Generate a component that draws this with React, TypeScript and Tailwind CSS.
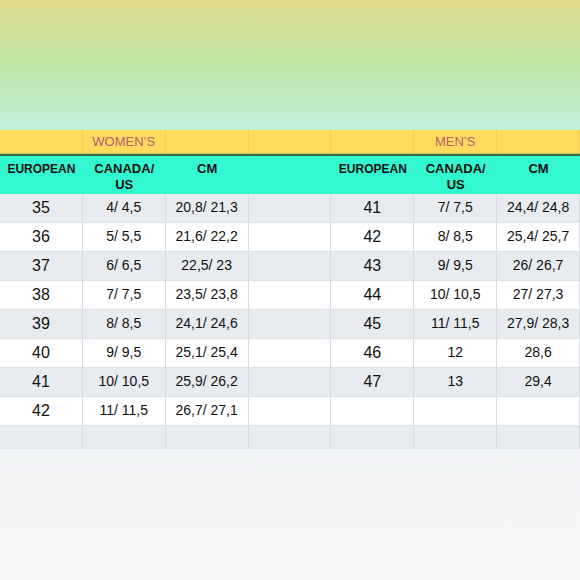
import React from "react";

const women = [
  ["35", "4/ 4,5", "20,8/ 21,3"],
  ["36", "5/ 5,5", "21,6/ 22,2"],
  ["37", "6/ 6,5", "22,5/ 23"],
  ["38", "7/ 7,5", "23,5/ 23,8"],
  ["39", "8/ 8,5", "24,1/ 24,6"],
  ["40", "9/ 9,5", "25,1/ 25,4"],
  ["41", "10/ 10,5", "25,9/ 26,2"],
  ["42", "11/ 11,5", "26,7/ 27,1"],
];
const men = [
  ["41", "7/ 7,5", "24,4/ 24,8"],
  ["42", "8/ 8,5", "25,4/ 25,7"],
  ["43", "9/ 9,5", "26/ 26,7"],
  ["44", "10/ 10,5", "27/ 27,3"],
  ["45", "11/ 11,5", "27,9/ 28,3"],
  ["46", "12", "28,6"],
  ["47", "13", "29,4"],
  ["", "", ""],
];

export default function App() {
  return (
    <div
      className="w-[580px] h-[580px] overflow-hidden flex flex-col bg-gradient-to-b from-[#edf0f2] to-[#f4f6f8]"
      style={{ fontFamily: '"Liberation Sans", Arial, sans-serif' }}
    >
      <div className="h-[130px] bg-gradient-to-b from-[#dedb8c] via-[#bde6a4] to-[#c0efdc]" />
      <div className="h-[23px] bg-[#fedb5c] grid grid-cols-7">
        {Array.from({ length: 7 }).map((_, i) => (
          <div
            key={i}
            className="border-r border-[#f3cf55] flex items-center justify-center text-[13px] text-[#b3606b] pt-[1px]"
          >
            {i === 1 ? "WOMEN’S" : i === 5 ? "MEN’S" : ""}
          </div>
        ))}
      </div>
      <div className="h-[1px] bg-[#b8c86a]" />
      <div className="h-[2px] bg-[#3c6b45]" />
      <div className="h-[38px] bg-[#33f7cf] grid grid-cols-7 font-bold text-[#111] leading-[16px]">
        {["EUROPEAN", "CANADA/\nUS", "CM", "", "EUROPEAN", "CANADA/\nUS", "CM"].map((t, i) => (
          <div
            key={i}
            className={`flex justify-center text-center pt-[5px] whitespace-pre ${
              t === "EUROPEAN" ? "text-[12px]" : "text-[13px]"
            }`}
          >
            {t}
          </div>
        ))}
      </div>
      {women.map((w, r) => {
        const m = men[r];
        const bg = r % 2 === 0 ? "bg-[#e8ecf0]" : "bg-white";
        const cells = [w[0], w[1], w[2], "", m[0], m[1], m[2]];
        return (
          <div key={r} className={`h-[29px] grid grid-cols-7 ${bg} border-b border-[#dde1e5] text-[#111]`}>
            {cells.map((c, i) => (
              <div
                key={i}
                className={`border-r border-[#d9dde1] flex items-center justify-center ${
                  i === 0 || i === 4 ? "text-[16px]" : "text-[14px] pb-[2px]"
                }`}
              >
                {c}
              </div>
            ))}
          </div>
        );
      })}
      <div className="h-[23px] grid grid-cols-7 bg-[#e8ecf0] border-b border-[#e4e7ea]">
        {Array.from({ length: 7 }).map((_, i) => (
          <div key={i} className="border-r border-[#d9dde1]" />
        ))}
      </div>
    </div>
  );
}
